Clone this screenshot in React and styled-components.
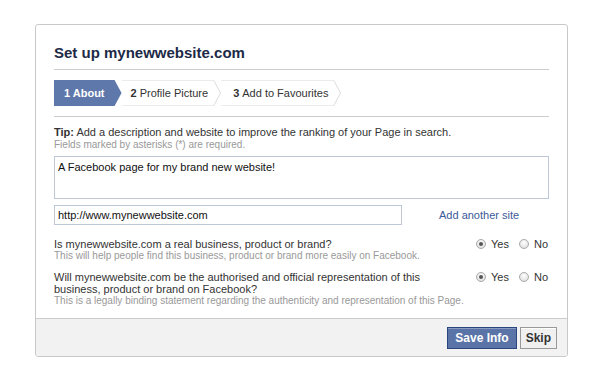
import React from "react";
import styled, { createGlobalStyle } from "styled-components";

const GlobalStyle = createGlobalStyle`
  body {
    margin: 0;
    background: #fff;
    font-family: "Liberation Sans", Arial, sans-serif;
    color: #333;
  }
`;

const Page = styled.div`
  width: 600px;
  height: 375px;
  padding: 24px 0 0 35px;
  box-sizing: border-box;
`;

const Card = styled.div`
  width: 533px;
  height: 333px;
  border: 1px solid #c9c9c9;
  border-radius: 3px;
  box-sizing: border-box;
  display: flex;
  flex-direction: column;
  background: #fff;
  overflow: hidden;
`;

const Body = styled.div`
  flex: 1;
  padding: 19px 18px 0 18px;
`;

const Title = styled.h1`
  margin: 0;
  font-size: 15px;
  line-height: 18px;
  font-weight: bold;
  color: #1c2a47;
  padding-bottom: 7px;
  border-bottom: 1px solid #ccc;
`;

const Steps = styled.div`
  display: flex;
  align-items: stretch;
  height: 26px;
  margin: 10px 0 0;
  padding-bottom: 10px;
  border-bottom: 1px solid #ccc;
`;

const ActiveStep = styled.div`
  display: flex;
  align-items: center;
  background: #5f78ab;
  color: #fff;
  font-weight: bold;
  font-size: 11px;
  padding: 0 17px 0 10px;
  clip-path: polygon(0 0, calc(100% - 7px) 0, 100% 50%, calc(100% - 7px) 100%, 0 100%);
`;

const Step = styled.div`
  display: flex;
  align-items: center;
  gap: 3px;
  font-size: 11px;
  color: #333;
  padding: 0 5px 0 ${(p) => p.$lead}px;
  border-top: 1px solid #ececec;
  border-bottom: 1px solid #ececec;
  box-sizing: border-box;
  b {
    font-weight: bold;
  }
`;

const Chevron = () => (
  <svg width="8" height="26" viewBox="0 0 8 26" style={{ display: "block" }}>
    <polyline points="0.5,0 7.5,13 0.5,26" fill="none" stroke="#dcdcdc" strokeWidth="1" />
  </svg>
);

const Tip = styled.p`
  margin: 9px 0 0;
  font-size: 11px;
  line-height: 13px;
  color: #333;
  b {
    font-weight: bold;
  }
`;

const Note = styled.p`
  margin: 0;
  font-size: 10px;
  line-height: 11px;
  color: #999;
  white-space: nowrap;
`;

const TextArea = styled.div`
  margin-top: 6px;
  height: 43px;
  border: 1px solid #bdc7d8;
  box-sizing: border-box;
  padding: 4px 3px;
  font-size: 11px;
  line-height: 13px;
  color: #111;
`;

const UrlRow = styled.div`
  display: flex;
  align-items: center;
  margin-top: 6px;
`;

const Input = styled.div`
  width: 348px;
  height: 20px;
  border: 1px solid #bdc7d8;
  box-sizing: border-box;
  padding: 0 3px;
  font-size: 11px;
  line-height: 18px;
  color: #111;
`;

const Link = styled.a`
  margin-left: 37px;
  font-size: 11px;
  color: #3b5998;
  text-decoration: none;
`;

const Question = styled.div`
  display: flex;
  justify-content: space-between;
  align-items: flex-start;
  margin-top: ${(p) => p.$top}px;
`;

const QText = styled.div`
  width: 400px;
  font-size: 11px;
  line-height: 12px;
  color: #333;
`;

const Options = styled.div`
  display: flex;
  align-items: center;
  gap: 10px;
  font-size: 11px;
  color: #333;
  padding-right: 1px;
`;

const Option = styled.label`
  display: flex;
  align-items: center;
  gap: 5px;
`;

const Radio = styled.span`
  width: 8px;
  height: 8px;
  border-radius: 50%;
  border: 1px solid #a9a9a9;
  background: radial-gradient(circle at 50% 35%, #fff, #d8d8d8);
  display: flex;
  align-items: center;
  justify-content: center;
  &::after {
    content: "";
    width: 4px;
    height: 4px;
    border-radius: 50%;
    background: ${(p) => (p.$checked ? "#555" : "transparent")};
  }
`;

const Footer = styled.div`
  height: 37px;
  background: #f2f2f2;
  border-top: 1px solid #ccc;
  display: flex;
  justify-content: flex-end;
  align-items: center;
  gap: 3px;
  padding: 0 10px 0 0;
`;

const Button = styled.button`
  height: 22px;
  padding: 0 ${(p) => (p.$primary ? 7 : 5)}px;
  font-family: "Liberation Sans", Arial, sans-serif;
  font-size: 12px;
  font-weight: bold;
  border: 1px solid ${(p) => (p.$primary ? "#29447e" : "#999")};
  background: ${(p) => (p.$primary ? "#5b74a8" : "#f0f0f0")};
  color: ${(p) => (p.$primary ? "#fff" : "#333")};
  box-shadow: inset 0 1px 0 ${(p) => (p.$primary ? "#8a9cc2" : "#fff")};
`;

function RadioPair() {
  return (
    <Options>
      <Option>
        <Radio $checked /> Yes
      </Option>
      <Option>
        <Radio /> No
      </Option>
    </Options>
  );
}

export default function App() {
  return (
    <Page>
      <GlobalStyle />
      <Card>
        <Body>
          <Title>Set up mynewwebsite.com</Title>
          <Steps>
            <ActiveStep>1 About</ActiveStep>
            <Step $lead={9}>
              <b>2</b> Profile Picture
            </Step>
            <Chevron />
            <Step $lead={12}>
              <b>3</b> Add to Favourites
            </Step>
            <Chevron />
          </Steps>
          <Tip>
            <b>Tip:</b> Add a description and website to improve the ranking of your Page in search.
          </Tip>
          <Note>Fields marked by asterisks (*) are required.</Note>
          <TextArea>A Facebook page for my brand new website!</TextArea>
          <UrlRow>
            <Input>http://www.mynewwebsite.com</Input>
            <Link href="#">Add another site</Link>
          </UrlRow>
          <Question $top={13}>
            <QText>
              Is mynewwebsite.com a real business, product or brand?
              <Note>This will help people find this business, product or brand more easily on Facebook.</Note>
            </QText>
            <RadioPair />
          </Question>
          <Question $top={10}>
            <QText>
              Will mynewwebsite.com be the authorised and official representation of this business, product or brand on Facebook?
              <Note>This is a legally binding statement regarding the authenticity and representation of this Page.</Note>
            </QText>
            <RadioPair />
          </Question>
        </Body>
        <Footer>
          <Button $primary>Save Info</Button>
          <Button>Skip</Button>
        </Footer>
      </Card>
    </Page>
  );
}
